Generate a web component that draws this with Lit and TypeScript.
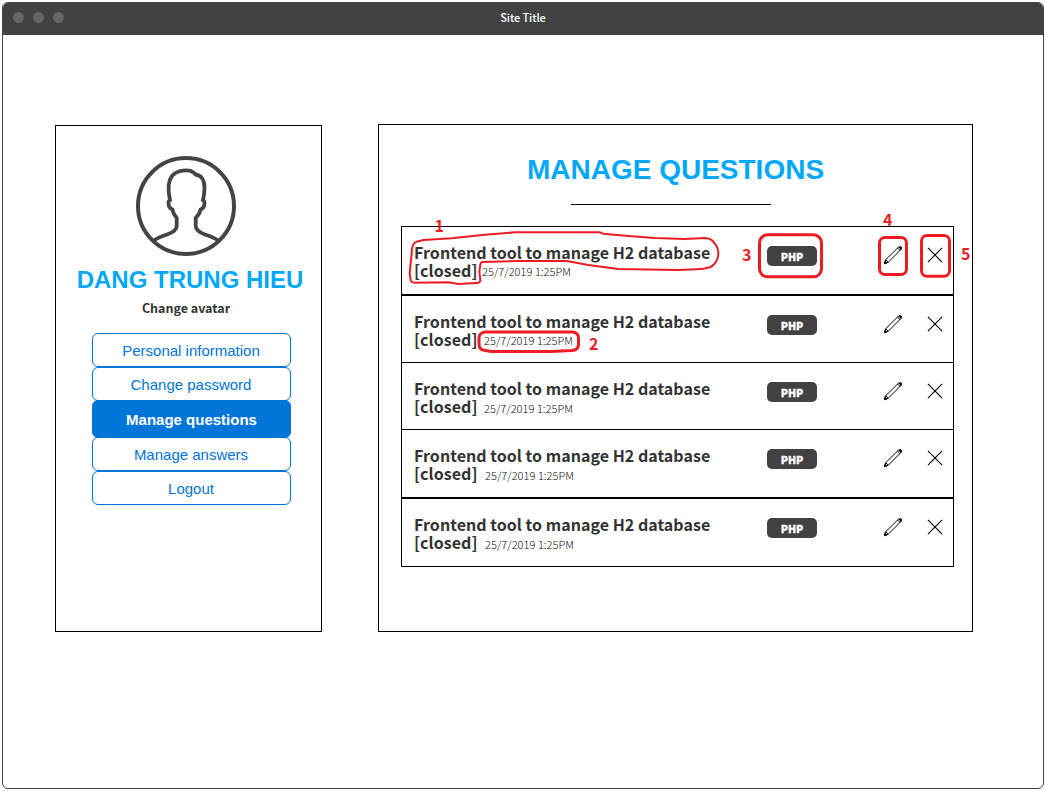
import { LitElement, html, css, svg } from "lit";
import { customElement, property } from "lit/decorators.js";

const menu = ["Personal information", "Change password", "Manage questions", "Manage answers", "Logout"];
const questions = [
  { kind: "boxed", gap: 4.5, lift: 1 },
  { kind: "boxed", gap: 6.5, lift: 1 },
  { kind: "joined", gap: 6.5, lift: 0 },
  { kind: "joined", gap: 7.5, lift: 0 },
  { kind: "last", gap: 7.5, lift: 0 },
];

@customElement("question-row")
class QuestionRow extends LitElement {
  @property({ type: Number }) gap = 7;
  @property({ type: Number }) lift = 0;
  static styles = css`
    :host {
      display: grid;
      grid-template-columns: 353px 117px 43px 16px;
      align-items: start;
      padding: 16px 10px 0 12px;
      color: #333;
      font-family: "Noto Sans CJK SC", sans-serif;
    }
    .text { font-size: 16px; font-weight: 700; line-height: 18px; white-space: nowrap; }
    .title { letter-spacing: 0.03px; }
    .closed { letter-spacing: 0.07px; }
    .second { display: flex; height: 18px; }
    .date { font-size: 11px; font-weight: 300; line-height: 23px; color: #111; letter-spacing: 0.05px; }
    .date.lift { line-height: 21px; }
    .tag {
      width: 50px; height: 20px; border-radius: 5px; margin-top: 3px;
      background: #424242; color: #fff; text-align: center;
      font-size: 10.5px; font-weight: 900; line-height: 21px;
      -webkit-text-stroke: 0.3px #fff;
    }
    svg { display: block; fill: none; stroke: #000; }
    .pencil { margin-top: 3px; }
    .cross { margin-top: 4px; }
  `;
  render() {
    return html`
      <div class="text">
        <div class="title">Frontend tool to manage H2 database</div>
        <div class="second">
          <span class="closed">[closed]</span>
          <span class="date ${this.lift ? "lift" : ""}" style="margin-left:${this.gap}px">25/7/2019 1:25PM</span>
        </div>
      </div>
      <div class="tag">PHP</div>
      <svg class="pencil" width="19" height="19" viewBox="0.3 0.2 19 19">
        <path d="M.8 17.8 2 13.9 14.7 1.4 Q16 .2 17.2 1.3 Q18.3 2.5 17.2 3.8 L4.6 16.4Z M2 13.9 4.6 16.4 M13.8 2.3 16.3 4.7" stroke-width="1" />
        <path d="M.2 18.6 1 14.8 3.7 17.500Z M14.800 1.400 Q16.500 0 17.900 1.100 Q18.800 2.600 17.300 4.100Z" fill="#000" stroke="none" />
      </svg>
      <svg class="cross" width="16" height="16" viewBox="-0.5 -0.5 16 16">
        <path d="M.4.4 14.6 14.6M14.6.4.4 14.6" stroke-width="1.1" />
      </svg>
    `;
  }
}

@customElement("app-root")
class AppRoot extends LitElement {
  static styles = css`
    :host {
      display: block; position: relative; box-sizing: border-box;
      height: 792px; padding: 2px 2px 3px; background: #fff; overflow: hidden;
      font-family: "Noto Sans CJK SC", sans-serif;
    }
    * { box-sizing: border-box; }
    .window {
      height: 787px; border: 1px solid #424242; border-radius: 6px; overflow: hidden;
    }
    .bar {
      height: 32px; background: #424242; color: #fff;
      display: grid; grid-template-columns: 1fr auto 1fr; align-items: center;
    }
    .dots { display: flex; gap: 9px; padding-left: 10px; margin-top: -4px; }
    .dots i { width: 11px; height: 11px; border-radius: 50%; background: #666; }
    .bar span { font-size: 11px; font-weight: 500; line-height: 20px; margin-top: -4px; letter-spacing: -0.1px; }
    .content { display: flex; gap: 56px; padding: 89px 0 0 52px; }
    .card { border: 1px solid #000; }
    .profile {
      width: 267px; height: 507px; margin-top: 1px;
      display: flex; flex-direction: column; align-items: center;
    }
    .avatar { display: block; margin: 30px 5px 0 0; }
    h2, h1 {
      margin: 0; color: #03a9f8; font-family: "Liberation Sans", Arial, sans-serif;
      font-weight: 700; white-space: nowrap;
    }
    h2 { font-size: 24px; line-height: 28px; margin: 10px 0 0 3px; }
    .change { font-size: 12.5px; font-weight: 700; line-height: 18px; color: #333; margin: 5px 5px 0 0; }
    nav { width: 199px; margin: 16px 0 0 5px; font-family: "Liberation Sans", Arial, sans-serif; }
    nav div {
      height: 34px; border: 1px solid #0275d8; border-radius: 6px; color: #0275d8;
      font-size: 15px; line-height: 34px; text-align: center;
    }
    nav .active {
      height: 38px; margin: -1px 0; background: #0275d8; color: #fff;
      font-weight: 700; line-height: 38px; padding-left: 1px;
    }
    .manage { width: 595px; height: 508px; padding: 29px 18px 0 22px; }
    h1 { font-size: 28px; line-height: 32px; text-align: center; padding-right: 4px; }
    .rule { width: 200px; height: 1px; background: #000; margin: 18px auto 21px 170px; }
    question-row { box-sizing: border-box; width: 553px; border: 1px solid #000; }
    .boxed { height: 69px; }
    .boxed + .boxed { height: 68px; }
    .joined { height: 68px; margin-top: -1px; }
    .joined + .joined { height: 69px; }
    .last { height: 69px; }
    .notes {
      position: absolute; inset: 0; fill: none; stroke: #ed1c24;
      stroke-linejoin: round; stroke-linecap: round; pointer-events: none;
    }
    .notes text { fill: #ed1c24; stroke: none; font-size: 16px; font-weight: 700; }
  `;

  render() {
    return html`
      <main class="window">
        <header class="bar">
          <div class="dots"><i></i><i></i><i></i></div>
          <span>Site Title</span>
        </header>
        <div class="content">
          <section class="card profile">
            <svg class="avatar" width="100" height="100" viewBox="0 0 100 100" fill="none" stroke="#444" stroke-width="4">
              <circle cx="50" cy="50" r="48" />
              <path stroke-width="3.8" d="M17 85Q22 81.500 31 78.500Q40.700 75 40.700 70V62Q37.500 58.500 36.300 53.500Q32.500 52 32.500 47Q32.500 44.500 34 44C32 35 32 25 36 20C41 14 53 13 57.500 16.500L59.500 18.500C65 19 68.500 24 68.500 32C68.500 37 68 40 67 44Q68.500 44.500 68.500 47Q68.500 52 64.700 53.500Q63.500 58.500 59.700 62V70Q59.700 75 69 78.500Q78 81.500 83 85" />
            </svg>
            <h2>DANG TRUNG HIEU</h2>
            <div class="change">Change avatar</div>
            <nav>
              ${menu.map((m) => html`<div class=${m === "Manage questions" ? "active" : ""}>${m}</div>`)}
            </nav>
          </section>
          <section class="card manage">
            <h1>MANAGE QUESTIONS</h1>
            <div class="rule"></div>
            ${questions.map((q) => html`<question-row class=${q.kind} .gap=${q.gap} .lift=${q.lift}></question-row>`)}
          </section>
        </div>
      </main>
      <svg class="notes" width="1046" height="792">
        <path transform="translate(395 210) scale(.33333)" stroke-width="6" d="M85 90 170 85 270 74 360 67H615L625 71 700 78 780 84 870 87 930 84Q950 85 957 98Q970 112 970 130Q970 158 945 172Q925 178 905 178L850 180 670 177 580 165 515 153H370L262 156Q257 157 256 163L253 185 256 212Q254 219 245 219L190 222 160 217 60 218Q48 218 47 210L44 190 50 130Q50 100 65 95Z" />
        <g stroke-width="3">
          <path d="M485 332H573Q578.500 333 578.500 338V345Q578 350 572 350.500L551 351.500H491L483 350Q479 349 479 344V338Q479 333 485 332Z" />
          <rect x="759.500" y="234.800" width="62" height="42" rx="8" />
          <rect x="879.500" y="237.500" width="27" height="37" rx="5.500" />
          <rect x="921.500" y="235.500" width="28" height="40.700" rx="5.500" />
        </g>
        ${[
          ["1", 434.5, 232], ["2", 589, 350], ["3", 742, 261], ["4", 883, 226], ["5", 961, 260],
        ].map(([n, x, y]) => svg`<text x=${x} y=${y}>${n}</text>`)}
      </svg>
    `;
  }
}
